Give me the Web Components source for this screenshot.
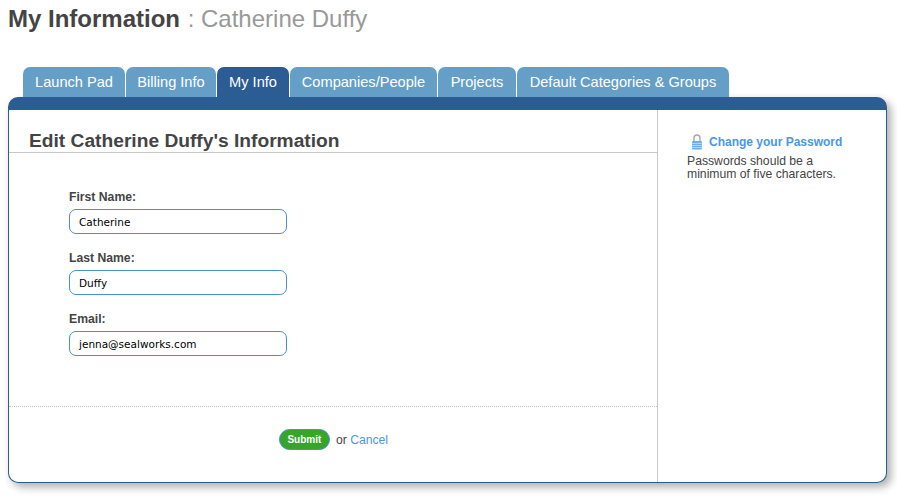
<!DOCTYPE html>
<html>
<head>
<meta charset="utf-8">
<title>My Information</title>
<style>
  html, body { margin: 0; background: #fff; }
  body { font-family: "Liberation Sans", Arial, sans-serif; color: #444; }
</style>
</head>
<body>
<account-page>
  <span slot="title">My Information</span>
  <span slot="name">Catherine Duffy</span>
  <tab-item style="width:102px">Launch Pad</tab-item>
  <tab-item style="width:90px">Billing Info</tab-item>
  <tab-item style="width:72px" active>My Info</tab-item>
  <tab-item style="width:147px">Companies/People</tab-item>
  <tab-item style="width:78px">Projects</tab-item>
  <tab-item style="width:212px">Default Categories &amp; Groups</tab-item>
  <edit-form slot="main" heading="Edit Catherine Duffy's Information">
    <form-field label="First Name:" value="Catherine"></form-field>
    <form-field label="Last Name:" value="Duffy"></form-field>
    <form-field label="Email:" value="jenna@sealworks.com"></form-field>
  </edit-form>
  <password-note slot="side"></password-note>
</account-page>

<script>
class AccountPage extends HTMLElement {
  constructor() {
    super();
    this.attachShadow({ mode: "open" });
    this.shadowRoot.innerHTML = `
    <style>
      :host { display: block; width: 897px; height: 496px; overflow: hidden; box-sizing: border-box; padding: 5px 10px 0 8px; }
      h1 { margin: 0; height: 62px; font-size: 24px; line-height: 28px; font-weight: bold; color: #444; }
      h1 .sub { font-weight: normal; color: #999; margin-left: 1px; }
      .tabs { display: flex; gap: 1px; padding-left: 15px; height: 30px; }
      .panel {
        display: grid; grid-template-columns: 648px 1fr; box-sizing: border-box; height: 386px;
        background: #fff; border: 1px solid #2b5c94; border-top: 13px solid #2b5c94; border-radius: 10px;
        box-shadow: 4px 4px 8px rgba(0,0,0,.32);
      }
      .side { border-left: 1px solid #c8c8c8; min-height: 0; }
    </style>
    <h1><slot name="title"></slot> <span class="sub">: <slot name="name"></slot></span></h1>
    <nav class="tabs"><slot></slot></nav>
    <section class="panel">
      <slot name="main"></slot>
      <div class="side"><slot name="side"></slot></div>
    </section>`;
  }
}

class TabItem extends HTMLElement {
  constructor() {
    super();
    this.attachShadow({ mode: "open" });
    this.shadowRoot.innerHTML = `
    <style>
      :host { display: flex; align-items: center; justify-content: center; box-sizing: border-box; height: 30px;
        background: #659fc7; color: #fff; font-size: 14.6px; padding-bottom: 1px; border-radius: 7px 7px 0 0; white-space: nowrap; }
      :host([active]) { background: #2b5c94; }
    </style>
    <slot></slot>`;
  }
}

class EditForm extends HTMLElement {
  constructor() {
    super();
    this.attachShadow({ mode: "open" });
    this.shadowRoot.innerHTML = `
    <style>
      :host { display: flex; flex-direction: column; min-width: 0; }
      h2 { margin: 0; box-sizing: border-box; height: 43px; padding: 20px 0 0 20px; font-size: 19.2px; line-height: 22px; color: #444; border-bottom: 1px solid #c8c8c8; }
      .fields { display: flex; flex-direction: column; gap: 17px; box-sizing: border-box; height: 254px; padding: 37px 0 0 60px; border-bottom: 1px dotted #c4c4c4; }
      .actions { display: flex; align-items: center; justify-content: center; gap: 6px; height: 65px; padding-left: 1px; font-size: 12.2px; color: #444; }
      button { height: 21px; width: 51px; padding: 0; border: 1px solid #4a8fd0; border-radius: 11px; background: #36a62b; color: #fff; font: bold 10px "Liberation Sans", Arial, sans-serif; }
      a { color: #4a97e8; text-decoration: none; }
    </style>
    <h2></h2>
    <div class="fields"><slot></slot></div>
    <div class="actions"><button type="button">Submit</button><span>or <a href="#">Cancel</a></span></div>`;
    this.shadowRoot.querySelector("h2").textContent = this.getAttribute("heading");
  }
}

class FormField extends HTMLElement {
  constructor() {
    super();
    this.attachShadow({ mode: "open" });
    this.shadowRoot.innerHTML = `
    <style>
      :host { display: block; width: 218px; }
      label { display: block; font-size: 12.2px; font-weight: bold; line-height: 14px; margin-bottom: 5px; color: #444; }
      .input { box-sizing: border-box; height: 25px; padding: 0 9px; border: 1px solid #4a8fd0; border-radius: 7px;
        font: 10.5px/25px "DejaVu Sans", Verdana, sans-serif; color: #000; }
    </style>
    <label></label>
    <div class="input"></div>`;
    this.shadowRoot.querySelector("label").textContent = this.getAttribute("label");
    this.shadowRoot.querySelector(".input").textContent = this.getAttribute("value");
  }
}

class PasswordNote extends HTMLElement {
  constructor() {
    super();
    this.attachShadow({ mode: "open" });
    this.shadowRoot.innerHTML = `
    <style>
      :host { display: block; padding: 24px 0 0 29px; font-size: 12.2px; line-height: 13px; color: #444; }
      .link { display: flex; align-items: center; gap: 6px; padding-left: 4px; margin-bottom: 5px; height: 16px; font-size: 12px; }
      a { color: #4a97e8; font-weight: bold; text-decoration: none; }
      svg { display: block; }
    </style>
    <div class="link">
      <svg width="12" height="16" viewBox="0 0 12 16">
        <path d="M3 7.5V4a3 3 0 0 1 6 0V7.5" fill="none" stroke="#a8a8a8" stroke-width="1.4"/>
        <rect x="1" y="7" width="10" height="8.5" rx="1" fill="#6fb0ea"/>
        <path d="M1 9.5h10M1 11.5h10M1 13.5h10" stroke="#cfe5f8" stroke-width=".7"/>
      </svg>
      <a href="#">Change your Password</a>
    </div>
    <div>Passwords should be a<br>minimum of five characters.</div>`;
  }
}

customElements.define("account-page", AccountPage);
customElements.define("tab-item", TabItem);
customElements.define("edit-form", EditForm);
customElements.define("form-field", FormField);
customElements.define("password-note", PasswordNote);
</script>
</body>
</html>
